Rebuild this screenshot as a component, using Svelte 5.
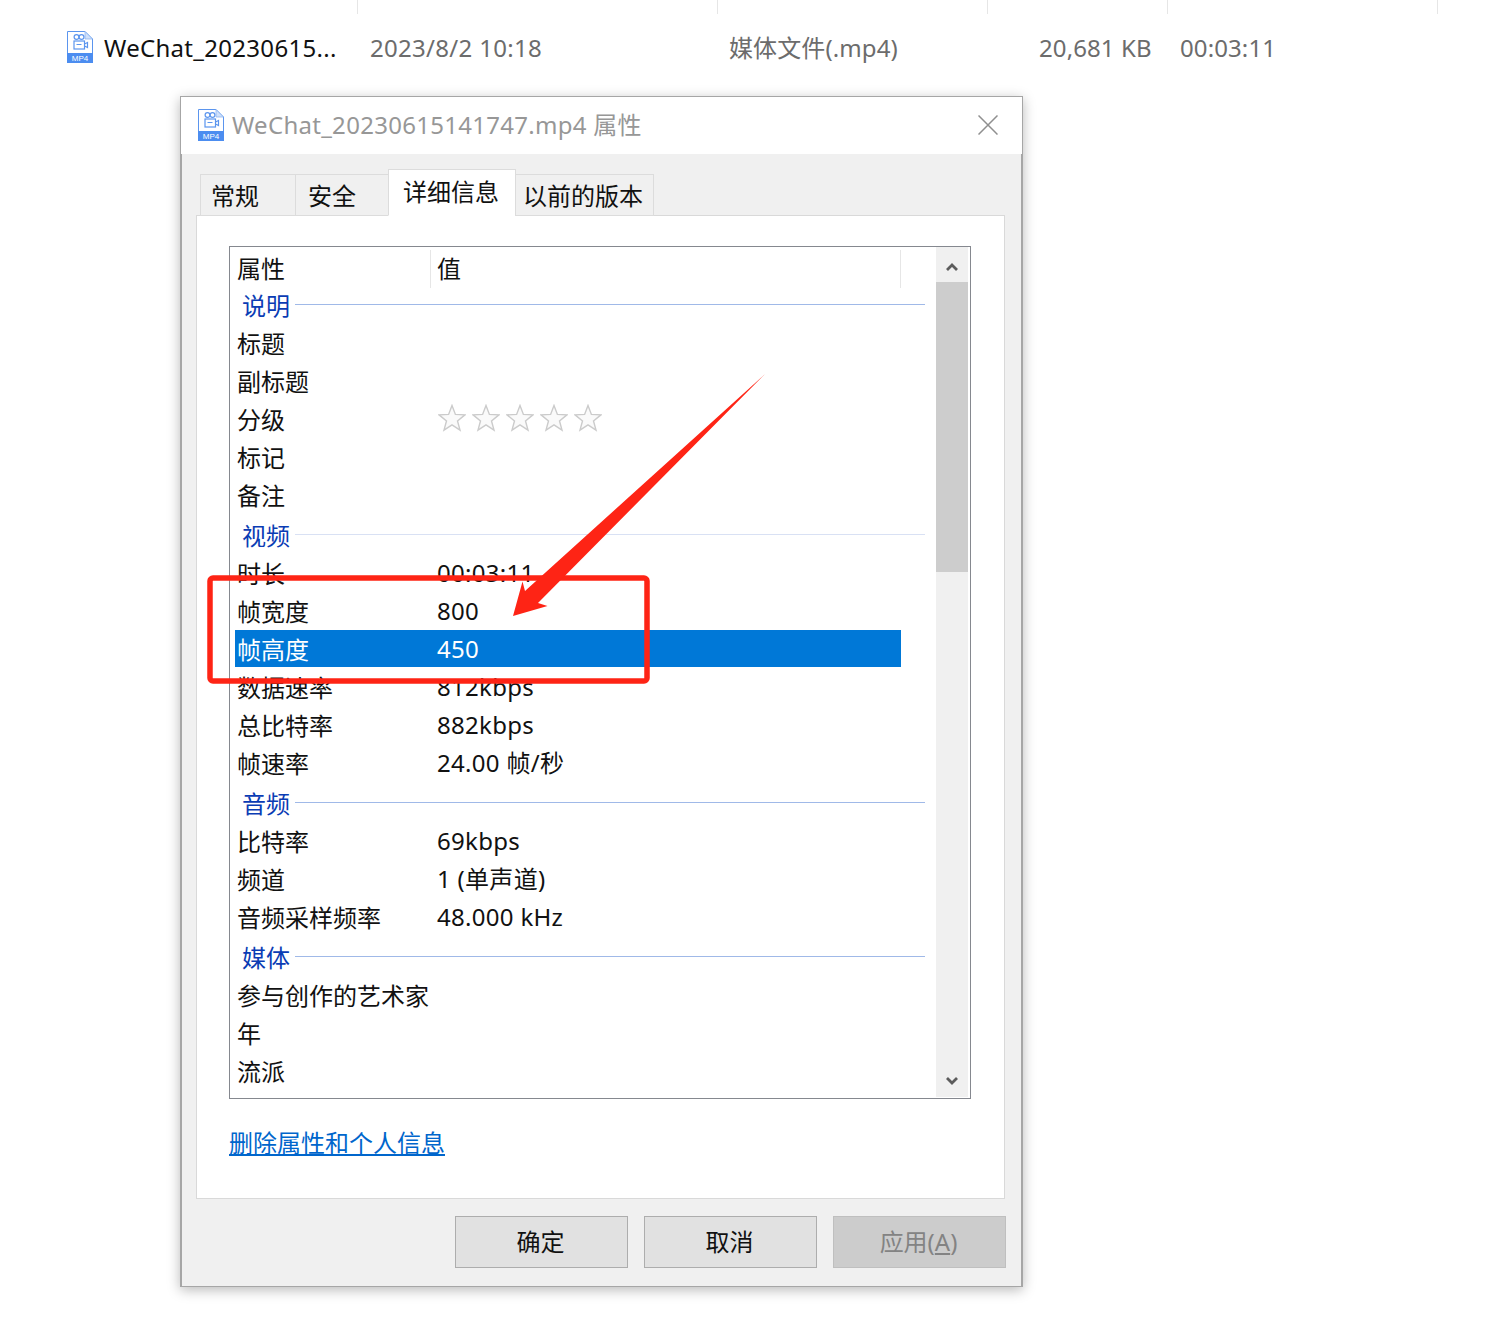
<script>
  const groups = [
    { name: '说明', rows: [['标题',''],['副标题',''],['分级','*'],['标记',''],['备注','']] },
    { name: '视频', light: true, rows: [['时长','00:03:11'],['帧宽度','800'],['帧高度','450',true],['数据速率','812kbps'],['总比特率','882kbps'],['帧速率','24.00 帧/秒']] },
    { name: '音频', rows: [['比特率','69kbps'],['频道','1 (单声道)'],['音频采样频率','48.000 kHz']] },
    { name: '媒体', rows: [['参与创作的艺术家',''],['年',''],['流派','']] }
  ];
  const seps = [357, 717, 987, 1167, 1437];
  const tabs = ['常规', '安全', '详细信息', '以前的版本'];
</script>

{#snippet fileIcon()}
  <svg class="ficon" viewBox="0 0 26 32" width="26" height="32">
    <path d="M.5.5H18L25.5 8V31.5H.5Z" fill="#fff" stroke="#5b95ee"/>
    <path d="M18 .5V8H25.5Z" fill="#cfe0fa" stroke="#8db5f2" stroke-width=".8"/>
    <rect x="0" y="22" width="26" height="10" fill="#4c8df0"/>
    <text x="13" y="30" text-anchor="middle" class="mp4">MP4</text>
    <g fill="none" stroke="#5b95ee" stroke-width="1.2">
      <circle cx="9.5" cy="6" r="2.4"/><circle cx="14.5" cy="6" r="2.4"/>
      <rect x="7" y="10" width="10.5" height="8"/><path d="M17.5 13l3-1.5v5l-3-1.5M9.5 13.5h5"/>
    </g>
  </svg>
{/snippet}

<div class="page">
  <div class="seps">
    {#each seps as s, i}
      <i style="left:{s}px"></i>
    {/each}
  </div>
  <div class="filerow">
    {@render fileIcon()}
    <span class="fname">WeChat_20230615...</span>
    <span class="fdate">2023/8/2 10:18</span>
    <span class="ftype">媒体文件(.mp4)</span>
    <span class="fsize">20,681 KB</span>
    <span class="fdur">00:03:11</span>
  </div>

  <div class="dialog">
    <div class="titlebar">
      {@render fileIcon()}
      <span class="title">WeChat_20230615141747.mp4 属性</span>
      <svg class="close" viewBox="0 0 20 20" width="20" height="20"><path d="M.5.5l19 19M19.5.5l-19 19" stroke="#8f8f8f" stroke-width="1.5" fill="none"/></svg>
    </div>
    <div class="body">
      <div class="tabs">
        {#each tabs as t, i}
          <div class="tab t{i}" class:active={i === 2}>{t}</div>
        {/each}
      </div>
      <div class="panel">
        <div class="list">
          <div class="rows">
            <div class="head">
              <span class="c1">属性</span>
              <span class="c2">值</span>
            </div>
            {#each groups as g, gi}
              <div class="group" class:first={gi === 0}>
                <span>{g.name}</span><i class:light={g.light}></i>
              </div>
              {#each g.rows as r}
                <div class="row" class:sel={r[2]}>
                  <span class="k">{r[0]}</span>
                  {#if r[1] === '*'}
                    <span class="stars">
                      {#each [0,1,2,3,4] as n}
                        <svg viewBox="0 0 28 28" width="28" height="28"><path d="M14 1.5l3.4 8.9 9.5.5-7.4 6 2.5 9.2L14 20.9l-8 5.2 2.5-9.2-7.4-6 9.5-.5Z" fill="#fafafa" stroke="#cbcbcb" stroke-width="1.4"/></svg>
                      {/each}
                    </span>
                  {:else}
                    <span class="v">{r[1]}</span>
                  {/if}
                </div>
              {/each}
            {/each}
          </div>
          <div class="scroll">
            <div class="sbtn"><svg viewBox="0 0 12 8" width="12" height="8"><path d="M1 7l5-5 5 5" fill="none" stroke="#5c5c5c" stroke-width="2.8"/></svg></div>
            <div class="thumb"></div>
            <div class="track"></div>
            <div class="sbtn"><svg viewBox="0 0 12 8" width="12" height="8"><path d="M1 1l5 5 5-5" fill="none" stroke="#5c5c5c" stroke-width="2.8"/></svg></div>
          </div>
        </div>
        <div class="link">删除属性和个人信息</div>
      </div>
      <div class="buttons">
        <div class="btn">确定</div>
        <div class="btn">取消</div>
        <div class="btn off">应用(<u>A</u>)</div>
      </div>
    </div>
  </div>

  <svg class="anno" viewBox="0 0 1494 1334" width="1494" height="1334">
    <rect x="210" y="578" width="437" height="103" rx="3" fill="none" stroke="#fe2415" stroke-width="5.5"/>
    <path d="M765 374L538 603L547.5 606L513 616L522.5 581.5L525 591Z" fill="#fe2415"/>
  </svg>
</div>

<style>
  :global(body) { margin: 0; background: #fff; }
  .page {
    position: relative;
    width: 1494px;
    height: 1334px;
    overflow: hidden;
    font: 24px/1 "Noto Sans", "Noto Sans CJK SC", sans-serif;
    color: #111;
    background: #fff;
  }
  .seps i { position: absolute; top: 0; width: 1px; height: 14px; background: #e6e6e6; }
  .filerow { height: 96px; box-sizing: border-box; padding: 31px 0 0 67px; display: flex; position: relative; }
  .filerow span { position: absolute; top: 33px; line-height: 30px; white-space: nowrap; letter-spacing: .3px; }
  .fname { left: 104px; color: #111; }
  .fdate { left: 370px; color: #6c6c6c; }
  .ftype { left: 729px; color: #6c6c6c; }
  .fsize { left: 1039px; color: #6c6c6c; }
  .fdur { left: 1180px; color: #6c6c6c; }
  .filerow .ftype, .filerow .fsize, .filerow .fdur { letter-spacing: .1px; }
  .ficon { display: block; flex: none; }
  .mp4 { font: 8px "Liberation Sans", sans-serif; fill: #fff; }

  .dialog {
    width: 843px;
    height: 1191px;
    margin-left: 180px;
    box-sizing: border-box;
    border: 1px solid #a6a6a6;
    box-shadow: 0 3px 12px rgba(0,0,0,.28);
    background: #f0f0f0;
    display: flex;
    flex-direction: column;
  }
  .titlebar {
    height: 57px;
    flex: none;
    background: #fff;
    display: flex;
    align-items: center;
    padding: 0 24px 0 17px;
    box-sizing: border-box;
  }
  .titlebar .ficon { margin-top: -1px; }
  .title { margin: -2px 0 0 8px; color: #979797; flex: 1; white-space: nowrap; letter-spacing: .28px; }
  .close { flex: none; margin-top: -1px; }
  .body {
    flex: 1;
    padding: 0 16px 0 14px;
    border-left: 1px solid #a6a6a6;
    border-right: 1px solid #a6a6a6;
    display: flex;
    flex-direction: column;
    min-height: 0;
  }
  .tabs { display: flex; align-items: flex-end; height: 62px; padding-left: 5px; margin-bottom: -1px; position: relative; z-index: 1; }
  .tab {
    height: 42px;
    box-sizing: border-box;
    border: 1px solid #dcdcdc;
    border-bottom: 1px solid #dcdcdc;
    margin-left: -1px;
    display: flex;
    align-items: center;
    background: #f0f0f0;
    padding: 2px 0 0 12px;
  }
  .t0 { width: 96px; padding-left: 10px; }
  .t1 { width: 94px; }
  .t2 { width: 128px; height: 47px; padding: 0 0 2px 14px; background: #fff; border-bottom-color: #fff; }
  .t3 { width: 139px; padding-left: 7px; }
  .panel {
    height: 984px;
    box-sizing: border-box;
    background: #fff;
    border: 1px solid #d9d9d9;
    padding: 30px 0 0 32px;
  }
  .list {
    width: 742px;
    height: 853px;
    box-sizing: border-box;
    border: 1px solid #85888f;
    display: flex;
    overflow: hidden;
  }
  .rows { flex: 1; min-width: 0; padding-top: 3px; }
  .head { height: 38px; position: relative; display: flex; align-items: center; }
  .head span { position: absolute; top: 0; height: 38px; display: flex; align-items: center; box-sizing: border-box; }
  .c1 { left: 7px; width: 194px; }
  .c2 { left: 200px; width: 471px; padding-left: 6px; border-left: 1px solid #e6e6e6; border-right: 1px solid #e6e6e6; }
  .group {
    height: 38px;
    margin-top: 2px;
    display: flex;
    align-items: center;
    padding-left: 12px;
    color: #0a3cb4;
    margin-right: 11px;
  }
  .group.first { margin-top: -2px; }
  .group span { flex: none; margin-top: 1px; }
  .group i { flex: 1; height: 1px; background: #a0b9e8; margin: -2px 0 0 5px; }
  .group i.light { background: #d9e1f4; }
  .row {
    height: 38px;
    display: flex;
    align-items: center;
    padding-left: 2px;
    margin-left: 5px;
    margin-right: 35px;
    box-sizing: border-box;
  }
  .row.sel { background: #0078d7; color: #fff; height: 37px; margin-bottom: 1px; padding-top: 1px; }
  .k { width: 200px; flex: none; white-space: nowrap; margin-top: 2px; }
  .v { white-space: nowrap; letter-spacing: .3px; }
  .stars { display: flex; gap: 6px; margin-top: -3px; margin-left: 1px; }
  .stars svg { display: block; }
  .scroll {
    width: 32px;
    flex: none;
    margin: 0 2px 1px 0;
    background: #f0f0f0;
    display: flex;
    flex-direction: column;
  }
  .sbtn { height: 35px; box-sizing: border-box; padding: 4px 1px 0 0; display: flex; align-items: center; justify-content: center; flex: none; }
  .sbtn:last-child { height: 36px; }
  .thumb { height: 290px; background: #cdcdcd; flex: none; }
  .track { flex: 1; }
  .link {
    margin-top: 29px;
    line-height: 30px;
    color: #0066cc;
    text-decoration: underline;
    width: max-content;
  }
  .buttons { display: flex; justify-content: flex-end; gap: 16px; margin: 17px -1px 0 0; }
  .btn {
    width: 173px;
    height: 52px;
    box-sizing: border-box;
    background: #e1e1e1;
    border: 1px solid #adadad;
    display: flex;
    align-items: center;
    justify-content: center;
    padding-right: 2px;
  }
  .btn.off { background: #cccccc; border-color: #bfbfbf; color: #838383; white-space: pre; }
  .anno { position: absolute; left: 0; top: 0; pointer-events: none; }
</style>
